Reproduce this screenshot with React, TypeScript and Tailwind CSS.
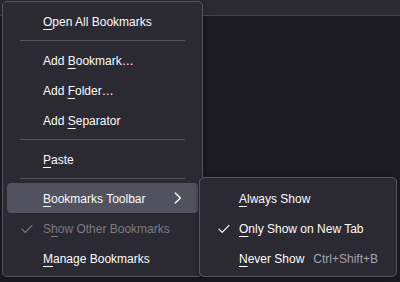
import React from 'react';

const font = { fontFamily: '"Liberation Sans", Arial, sans-serif' };

const Check: React.FC<{ className?: string }> = ({ className }) => (
  <svg width="12" height="10" viewBox="0 0 12 10" className={className} fill="none">
    <path d="M1 5.2 L4.2 8.4 L11 1.4" stroke="currentColor" strokeWidth="1.2" strokeLinecap="round" strokeLinejoin="round" />
  </svg>
);

const Chevron = () => (
  <svg width="8" height="12" viewBox="0 0 8 12" fill="none">
    <path d="M1.2 1 L6.4 6 L1.2 11" stroke="#fbfbfe" strokeWidth="1.4" strokeLinecap="round" strokeLinejoin="round" />
  </svg>
);

// label with one underlined access key
const Label: React.FC<{ text: string; k: number }> = ({ text, k }) => (
  <span className="whitespace-nowrap pt-[2px]">
    {text.slice(0, k)}
    <span className="underline decoration-1 underline-offset-[3px]">{text[k]}</span>
    {text.slice(k + 1)}
  </span>
);

interface RowProps {
  text: string;
  k: number;
  checked?: boolean;
  disabled?: boolean;
  hover?: boolean;
  submenu?: boolean;
  shortcut?: string;
  lead?: string;
}

const Row: React.FC<RowProps> = ({ text, k, checked, disabled, hover, submenu, shortcut, lead = 'w-[36px]' }) => (
  <div
    className={`h-[30px] mx-[4px] rounded-[4px] flex items-center ${hover ? 'bg-[#52525e]' : ''} ${
      disabled ? 'text-[#7b7a82]' : 'text-[#fbfbfe]'
    }`}
  >
    <div className={`${lead} shrink-0 flex items-center pl-[14px] pt-[1px]`}>{checked && <Check />}</div>
    <Label text={text} k={k} />
    {submenu && (
      <div className="ml-auto pr-[16px] flex items-center">
        <Chevron />
      </div>
    )}
    {shortcut && <span className="ml-auto pr-[14px] pt-[2px] text-[#a3a2aa]">{shortcut}</span>}
  </div>
);

const Sep = () => <div className="my-[4px] mx-[17px] h-px bg-[#55545c]" />;

export default function App() {
  return (
    <div className="relative w-[400px] h-[282px] overflow-hidden bg-[#1c1b22] text-[12px]" style={font}>
      <div className="h-[16px] bg-[#2b2a33] border-b border-[#45444c]" />

      <div className="absolute left-[2px] top-[1px] w-[201px] bg-[#2b2a33] border border-[#56555d] rounded-[5px] pt-[4px] pb-[3px] shadow-[0_2px_6px_rgba(0,0,0,0.35)]">
        <Row text="Open All Bookmarks" k={0} />
        <Sep />
        <Row text="Add Bookmark…" k={4} />
        <Row text="Add Folder…" k={4} />
        <Row text="Add Separator" k={4} />
        <Sep />
        <Row text="Paste" k={0} />
        <Sep />
        <Row text="Bookmarks Toolbar" k={0} hover submenu />
        <Row text="Show Other Bookmarks" k={1} checked disabled />
        <Row text="Manage Bookmarks" k={0} />
      </div>

      <div className="absolute left-[199px] top-[177px] w-[198px] bg-[#2b2a33] border border-[#56555d] rounded-[5px] pt-[5px] pb-[3px] shadow-[0_2px_6px_rgba(0,0,0,0.35)]">
        <Row text="Always Show" k={0} lead="w-[35px]" />
        <Row text="Only Show on New Tab" k={0} checked lead="w-[35px]" />
        <Row text="Never Show" k={0} shortcut="Ctrl+Shift+B" lead="w-[35px]" />
      </div>
    </div>
  );
}
